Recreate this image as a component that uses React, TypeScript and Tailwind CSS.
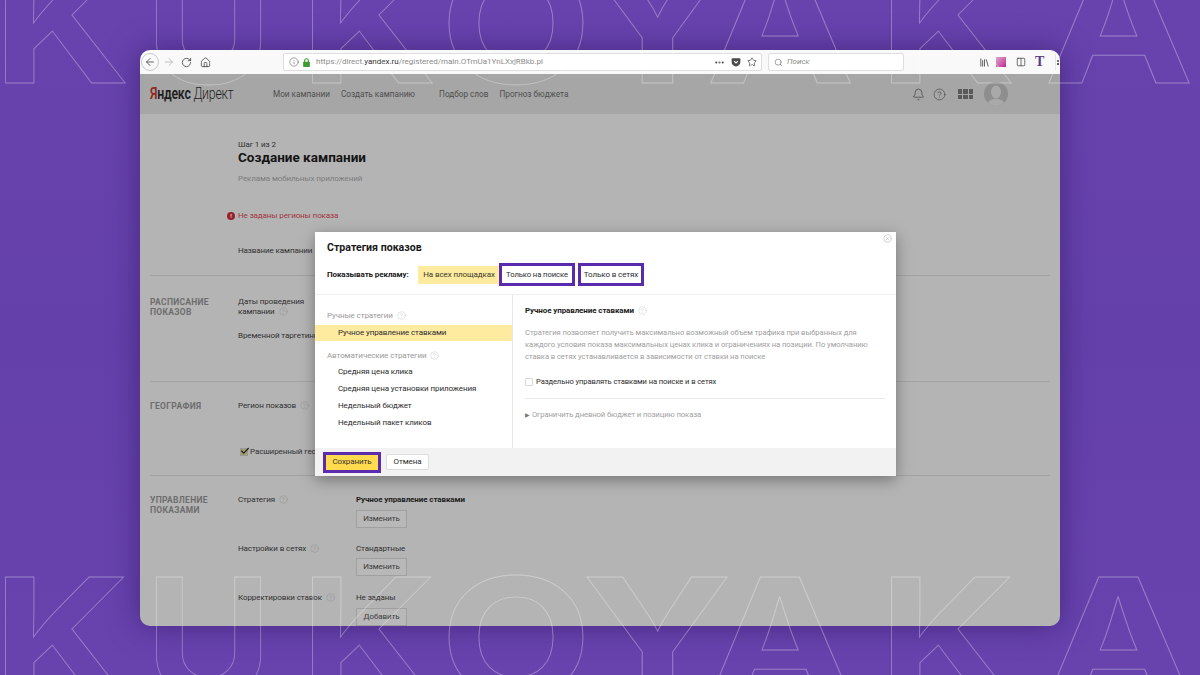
import { ArrowLeft, ArrowRight, RotateCw, Home, Info, Ellipsis, Star, Search, Library, Columns2, Bell, CircleHelp, XCircle, Check } from 'lucide-react'

const letters = [
  { c: 'K', x: -7, w: 137 },
  { c: 'U', x: 145, w: 127 },
  { c: 'K', x: 300, w: 137 },
  { c: 'O', x: 440, w: 152 },
  { c: 'Y', x: 582, w: 150 },
  { c: 'A', x: 706, w: 149 },
  { c: 'K', x: 879, w: 137 },
  { c: 'A', x: 1044, w: 150 },
]

function Outline() {
  return (
    <svg className="absolute inset-0 pointer-events-none" width="1200" height="675" fill="none">
      {[83, 697].map((y) =>
        letters.map((l, i) => (
          <text
            key={`${y}-${i}`}
            x={l.x}
            y={y}
            textLength={l.w}
            lengthAdjust="spacingAndGlyphs"
            fontFamily="Inter, sans-serif"
            fontWeight="700"
            fontSize="165"
            stroke="#ffffff"
            strokeOpacity="0.32"
            strokeWidth="0.8"
          >
            {l.c}
          </text>
        ))
      )}
    </svg>
  )
}

function Help({ light }: { light?: boolean }) {
  return <CircleHelp className={`inline-block ml-1 w-[9px] h-[9px] ${light ? 'text-[#c4c4c4]' : 'text-[#8f8f8f]'}`} strokeWidth={1.2} />
}

function Section({ title, h, pt, children }: { title: string; h: string; pt: string; children: React.ReactNode }) {
  return (
    <div className={`mx-[10px] border-b border-[#a2a2a2] grid grid-cols-[88px_118px_1fr] ${h} ${pt}`}>
      <div className="text-[8.5px] leading-[10px] font-bold tracking-[0.3px] text-[#6d6d6d] w-[70px]">{title}</div>
      {children}
    </div>
  )
}

function GrayButton({ children }: { children: React.ReactNode }) {
  return (
    <div className="h-[18px] w-[51px] border border-[#a0a0a0] bg-[#b8b8b8] flex items-center justify-center text-[8px] text-[#3c3c3c]">
      {children}
    </div>
  )
}

function Toolbar() {
  return (
    <div className="h-[24px] shrink-0 bg-[#f9f9fa] flex items-center text-[#3b3b3b] pl-[1px]">
      <div className="w-[18px] h-[18px] rounded-full border border-[#c9c9c9] flex items-center justify-center">
        <ArrowLeft className="w-[12px] h-[12px]" strokeWidth={1.5} />
      </div>
      <ArrowRight className="w-[12px] h-[12px] ml-[4px] text-[#b0b0b0]" strokeWidth={1.5} />
      <RotateCw className="w-[11px] h-[11px] ml-[6px]" strokeWidth={1.7} />
      <Home className="w-[11px] h-[11px] ml-[8px]" strokeWidth={1.7} />
      <div className="ml-[72px] w-[479px] h-[18px] bg-white border border-[#dedee0] rounded-[2px] flex items-center pl-[5px]">
        <Info className="w-[10px] h-[10px] text-[#666]" strokeWidth={1.5} />
        <svg viewBox="0 0 12 12" className="w-[9px] h-[9px] ml-[3px]">
          <rect x="1.5" y="5" width="9" height="7" rx="1" fill="#3f9b32" />
          <path d="M3.5 5.5V3.5a2.5 2.5 0 0 1 5 0v2" stroke="#3f9b32" strokeWidth="1.5" fill="none" />
        </svg>
        <span className="ml-[5px] text-[8px] text-[#8a8a8a]">
          https://direct.<span className="text-[#333]">yandex.ru</span>/registered/main.OTmUa1YnLXxjRBkb.pl
        </span>
        <div className="ml-auto flex items-center pr-[4px] gap-[6px]">
          <Ellipsis className="w-[11px] h-[11px] text-[#444]" strokeWidth={2.5} />
          <svg viewBox="0 0 16 16" className="w-[10px] h-[10px]">
            <path d="M2 2h12a1 1 0 0 1 1 1v5a7 7 0 0 1-14 0V3a1 1 0 0 1 1-1z" fill="#4a4a4f" />
            <path d="M5 6.5l3 3 3-3" stroke="#fff" strokeWidth="1.8" fill="none" />
          </svg>
          <Star className="w-[10px] h-[10px] text-[#333]" strokeWidth={1.6} />
        </div>
      </div>
      <div className="ml-[6px] w-[136px] h-[18px] bg-white border border-[#dedee0] rounded-[2px] flex items-center pl-[5px]">
        <Search className="w-[9px] h-[9px] text-[#777]" strokeWidth={1.8} />
        <span className="ml-[4px] text-[8px] italic text-[#8e8e8e]">Поиск</span>
      </div>
      <div className="ml-auto flex items-center pr-[1px]">
        <Library className="w-[11px] h-[11px] text-[#444]" strokeWidth={1.8} />
        <div className="ml-[6px] w-[10px] h-[10px] bg-gradient-to-br from-[#d9a5cf] to-[#c0178f]" />
        <Columns2 className="ml-[10px] w-[10px] h-[10px] text-[#444]" strokeWidth={1.8} />
        <span className="ml-[9px] w-[10px] font-['Liberation_Serif',serif] font-bold text-[14px] leading-none text-[#5a3d8a]">T</span>
        <div className="ml-[10px] pl-[1px] border-l border-[#e2e2e2] h-[16px] flex flex-col justify-center gap-[1px]">
          <div className="w-[2px] h-[2px] bg-[#555]" />
          <div className="w-[2px] h-[2px] bg-[#555]" />
        </div>
      </div>
    </div>
  )
}

function SiteHeader() {
  return (
    <div className="h-[40px] shrink-0 bg-[#a6a6a6] flex items-center pl-[10px] pr-[52px] text-[#4e4e4e]">
      <div className="w-[123px] whitespace-nowrap">
        <div className="inline-block origin-left scale-x-[0.77] text-[16px] leading-[20px] tracking-[-0.3px] text-[#1f1f1f]">
          <span className="text-[#8c2b22] font-semibold">Я</span>
          <span className="font-semibold">ндекс</span> <span className="font-light">Директ</span>
        </div>
      </div>
      <div className="flex text-[8.2px] whitespace-nowrap">
        <span>Мои кампании</span>
        <span className="ml-[11px]">Создать кампанию</span>
        <span className="ml-[24px]">Подбор слов</span>
        <span className="ml-[11px]">Прогноз бюджета</span>
      </div>
      <div className="ml-auto flex items-center">
        <Bell className="w-[13px] h-[13px]" strokeWidth={1.5} />
        <CircleHelp className="ml-[8px] w-[13px] h-[13px]" strokeWidth={1.3} />
        <div className="ml-[12px] grid grid-cols-3 gap-[1px]">
          {[0, 1, 2, 3, 4, 5].map((i) => (
            <div key={i} className="w-[4.5px] h-[4.5px] bg-[#5a5a5a]" />
          ))}
        </div>
        <div className="ml-[11px] w-[24px] h-[24px] rounded-full bg-[#8e8e8e] overflow-hidden">
          <svg viewBox="0 0 24 24" className="w-full h-full">
            <ellipse cx="12" cy="10" rx="5" ry="6.5" fill="#a9a9a9" />
            <path d="M3 24c1-6 5-7 9-7s8 1 9 7z" fill="#a9a9a9" />
          </svg>
        </div>
      </div>
    </div>
  )
}

function SitePage() {
  return (
    <div className="flex-1 bg-[#b4b4b4] text-[#303030] text-[8px] tracking-[-0.1px] leading-[10px] overflow-hidden">
      <div className="mx-[10px] border-b border-[#a2a2a2] pl-[88px] pt-[26px]">
        <div>Шаг 1 из 2</div>
        <div className="text-[13.5px] leading-[14px] font-bold tracking-normal text-[#141414]">Создание кампании</div>
        <div className="mt-[10px] text-[#7c7c7c]">Реклама мобильных приложений</div>
        <div className="mt-[27px] -ml-[11px] flex items-center text-[#a1343c]">
          <div className="w-[8px] h-[8px] rounded-full bg-[#96222a] mr-[3px] flex items-center justify-center text-[6px] font-bold text-[#dddddd]">!</div>
          Не заданы регионы показа
        </div>
        <div className="mt-[25px] mb-[19px]">Название кампании</div>
      </div>

      <Section title="РАСПИСАНИЕ ПОКАЗОВ" h="h-[106px]" pt="pt-[21px]">
        <div className="col-span-2">
          <div className="w-[80px]">Даты проведения кампании<Help /></div>
          <div className="mt-[14px]">Временной таргетинг</div>
        </div>
      </Section>

      <Section title="ГЕОГРАФИЯ" h="h-[94px]" pt="pt-[19px]">
        <div className="col-span-2">
          <div>Регион показов<Help /></div>
          <div className="mt-[36px] ml-[2px] flex items-center">
            <div className="relative w-[8px] h-[8px] bg-[#a69d6a] border border-[#999] mr-[2px]">
              <Check className="absolute -top-[3px] -left-[1px] w-[10px] h-[10px] text-[#222]" strokeWidth={3} />
            </div>
            Расширенный геотаргетинг
          </div>
        </div>
      </Section>

      <div className="mx-[10px] grid grid-cols-[88px_118px_1fr] pt-[19px]">
        <div className="text-[8.5px] leading-[10px] font-bold tracking-[0.3px] text-[#6d6d6d] w-[70px]">УПРАВЛЕНИЕ ПОКАЗАМИ</div>
        <div>Стратегия<Help /></div>
        <div>
          <div className="font-bold text-[#1c1c1c]">Ручное управление ставками</div>
          <div className="mt-[5px]"><GrayButton>Изменить</GrayButton></div>
        </div>
        <div className="col-start-2 mt-[16px]">Настройки в сетях<Help /></div>
        <div className="mt-[16px]">
          <div>Стандартные</div>
          <div className="mt-[4px]"><GrayButton>Изменить</GrayButton></div>
        </div>
        <div className="col-start-2 mt-[17px]">Корректировки ставок<Help /></div>
        <div className="mt-[17px]">
          <div>Не заданы</div>
          <div className="mt-[5px]"><GrayButton>Добавить</GrayButton></div>
        </div>
      </div>
    </div>
  )
}

function StrategyModal() {
  return (
    <div className="absolute left-[175px] top-[182px] w-[581px] h-[244px] bg-white shadow-[0_4px_14px_rgba(0,0,0,0.35)] flex flex-col text-[8px] tracking-[-0.1px] leading-[10px] text-[#2c2c2c]">
      <XCircle className="absolute right-[4px] top-[2px] w-[9px] h-[9px] text-[#c4c4c4]" strokeWidth={2} />
      <div className="h-[63px] shrink-0 border-b border-[#efefef] px-[12px]">
        <div className="pt-[9px] text-[10.6px] tracking-normal leading-[14px] font-bold text-[#1a1a1a]">Стратегия показов</div>
        <div className="mt-[8px] flex items-center h-[23px]">
          <div className="w-[91px] font-bold text-[#1a1a1a]">Показывать рекламу:</div>
          <div className="w-[82px] h-[18px] bg-[#ffeba0] flex items-center justify-center text-[#3a3a2a] whitespace-nowrap">На всех площадках</div>
          <div className="-ml-[1px] w-[76px] h-[23px] border-[3px] border-[#5a2cad] flex items-center justify-center whitespace-nowrap text-[7.7px]">Только на поиске</div>
          <div className="ml-[3px] w-[66px] h-[23px] border-[3px] border-[#5a2cad] flex items-center justify-center whitespace-nowrap">Только в сетях</div>
        </div>
      </div>

      <div className="flex-1 flex min-h-0">
        <div className="w-[198px] shrink-0 border-r border-[#e8e8e8] pt-[16px]">
          <div className="pl-[12px] text-[#9a9a9a]">Ручные стратегии<Help light /></div>
          <div className="mt-[4px] h-[16px] bg-[#ffeba0] pl-[23px] flex items-center">Ручное управление ставками</div>
          <div className="mt-[10px] pl-[12px] text-[#9a9a9a]">Автоматические стратегии<Help light /></div>
          <div className="pl-[23px]">
            <div className="mt-[6px]">Средняя цена клика</div>
            <div className="mt-[7px]">Средняя цена установки приложения</div>
            <div className="mt-[7px]">Недельный бюджет</div>
            <div className="mt-[7px]">Недельный пакет кликов</div>
          </div>
        </div>
        <div className="flex-1 pl-[12px] pr-[11px] pt-[11px]">
          <div className="font-bold text-[#1a1a1a]">Ручное управление ставками<Help light /></div>
          <div className="mt-[11px] text-[7.6px] tracking-[-0.05px] leading-[12px] text-[#a0a0a0] w-[350px]">
            Стратегия позволяет получить максимально возможный объем трафика при выбранных для каждого условия показа максимальных ценах клика и ограничениях на позиции. По умолчанию ставка в сетях устанавливается в зависимости от ставки на поиске
          </div>
          <div className="mt-[14px] flex items-center text-[7.6px]">
            <div className="w-[8px] h-[8px] border border-[#d8d8d8] rounded-[1px] mr-[3px]" />
            Раздельно управлять ставками на поиске и в сетях
          </div>
          <div className="mt-[11px] border-t border-[#e8e8e8] pt-[11px] text-[7.7px] text-[#a0a0a0] flex items-center">
            <span className="text-[6px] text-[#777] mr-[2px]">▶</span>
            Ограничить дневной бюджет и позицию показа
          </div>
        </div>
      </div>

      <div className="h-[28px] shrink-0 bg-[#f2f2f2] flex items-center pl-[8px]">
        <div className="w-[58px] h-[21px] border-[3px] border-[#5a2cad] bg-[#ffdb4d] flex items-center justify-center text-[#333]">Сохранить</div>
        <div className="ml-[5px] w-[43px] h-[16px] bg-white border border-[#dddddd] rounded-[2px] flex items-center justify-center">Отмена</div>
      </div>
    </div>
  )
}

export default function App() {
  return (
    <div className="relative w-[1200px] h-[675px] overflow-hidden bg-gradient-to-b from-[#6843ae] via-[#6440aa] to-[#6843ae] font-['Roboto',sans-serif] pt-[50px] pl-[140px]">
      <div className="relative w-[920px] h-[576px] rounded-[10px] overflow-hidden flex flex-col shadow-[0_0_30px_rgba(40,20,90,0.55)]">
        <Toolbar />
        <SiteHeader />
        <SitePage />
        <StrategyModal />
      </div>
      <Outline />
    </div>
  )
}
